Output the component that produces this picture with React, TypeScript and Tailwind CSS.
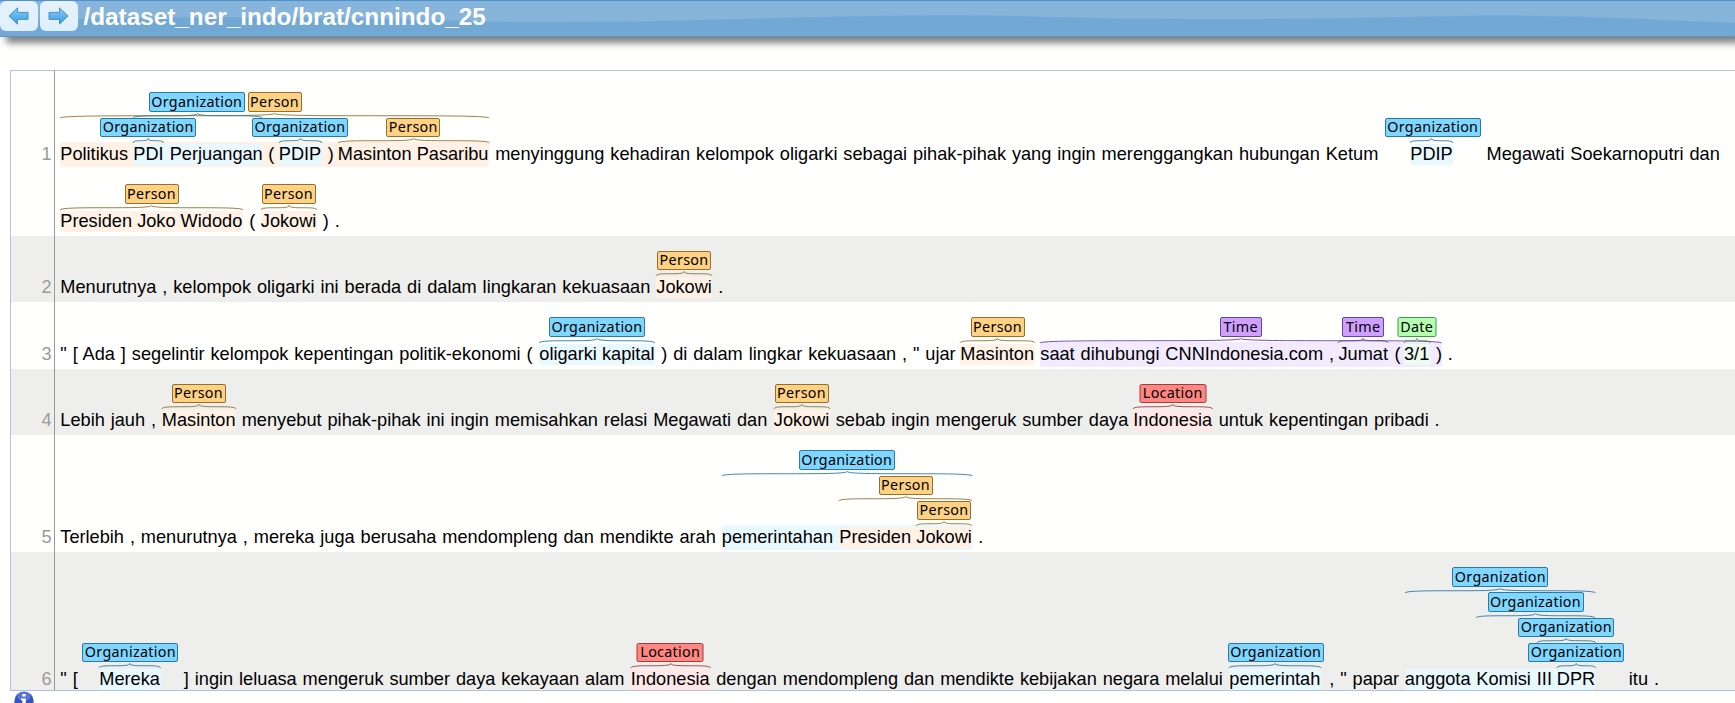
import type { ReactNode } from 'react';

type Kind = 'org' | 'person' | 'time' | 'date' | 'loc';

const kinds: Record<Kind, { name: string; label: string; mark: string; stroke: string }> = {
  org: { name: 'Organization', label: 'w-[96px] bg-[#7fd6ff] border-[#2a7ba2]', mark: 'bg-[#e8f8ff]', stroke: '#2a7ba2' },
  person: { name: 'Person', label: 'w-[54px] bg-[#ffd182] border-[#94702f]', mark: 'bg-[#fff1e5]', stroke: '#94702f' },
  time: { name: 'Time', label: 'w-[42px] bg-[#cfa0ff] border-[#6a419a]', mark: 'bg-[#f2eaff]', stroke: '#6a419a' },
  date: { name: 'Date', label: 'w-[39px] bg-[#b4ffb0] border-[#3f9a45]', mark: 'bg-[#eefcef]', stroke: '#3f9a45' },
  loc: { name: 'Location', label: 'w-[67px] bg-[#ff8781] border-[#a33c3c]', mark: 'bg-[#ffe8e7]', stroke: '#a33c3c' },
};

const levels = [
  { label: 'top-[calc(50%-37.2px)]', brace: 'top-[calc(50%-16.8px)]' },
  { label: 'top-[calc(50%-62.4px)]', brace: 'top-[calc(50%-42px)]' },
  { label: 'top-[calc(50%-87.6px)]', brace: 'top-[calc(50%-67.2px)]' },
  { label: 'top-[calc(50%-112.8px)]', brace: 'top-[calc(50%-92.4px)]' },
];

function Brace({ width, stroke, className }: { width: number; stroke: string; className: string }) {
  const c = width / 2;
  return (
    <svg className={`absolute left-0 overflow-visible ${className}`} width={width} height={5} fill="none">
      <path d={`M0,5 C0,0.5 ${c},5 ${c},0.5 C${c},5 ${width},0.5 ${width},5`} stroke={stroke} strokeWidth={0.9} />
    </svg>
  );
}

type MarkProps = {
  kind: Kind;
  w: number;
  level?: number;
  outer?: boolean;
  plain?: boolean;
  shift?: string;
  children: ReactNode;
};

function Mark({ kind, w, level = 0, outer, plain, shift = '-ml-[0.3px]', children }: MarkProps) {
  const k = kinds[kind];
  return (
    <span
      className={`relative flex shrink-0 items-center rounded-[3px] whitespace-pre ${outer ? 'h-[25px]' : 'h-[21px]'} ${plain ? '' : k.mark}`}
      style={{ width: w }}
    >
      <Brace width={w} stroke={k.stroke} className={levels[level].brace} />
      {children}
      <span
        className={`absolute left-1/2 flex h-[19.5px] -translate-x-1/2 items-center justify-center rounded-[2px] border font-['Noto_Sans',sans-serif] text-[14.3px] leading-none tracking-[0.3px] ${levels[level].label} ${k.label} ${shift}`}
      >
        {k.name}
      </span>
    </span>
  );
}

function T({ w, children }: { w?: number; children: ReactNode }) {
  return (
    <span className="shrink-0 [word-spacing:0.85px] whitespace-pre" style={{ width: w }}>
      {children}
    </span>
  );
}

function Line({ children }: { children: ReactNode }) {
  return <div className="flex h-[21px] items-center">{children}</div>;
}

function Row({ n, height, shade, pad = 'pb-[4px]', children }: { n: number; height: string; shade?: boolean; pad?: string; children: ReactNode }) {
  return (
    <div className={`flex ${height} ${shade ? 'bg-[#eeeeed]' : ''}`}>
      <div className={`flex w-[44px] shrink-0 flex-col border-r border-[#999] pr-[2.5px] text-right text-[#9b9b9b] ${n === 1 ? 'justify-start pt-[73px]' : `justify-end ${pad}`}`}>
        <span className="leading-[21px]">{n}</span>
      </div>
      <div className={`flex flex-col justify-end gap-[45.7px] pl-[5.3px] ${pad}`}>{children}</div>
    </div>
  );
}

function NavButton({ flip }: { flip?: boolean }) {
  return (
    <button className="flex h-[30px] w-[37.5px] items-center justify-center rounded-[6px] bg-linear-to-b from-[#e6f1fb] to-[#def0fd]">
      <svg width="21" height="18" viewBox="0 0 21 18" className={flip ? '-scale-x-100' : ''}>
        <defs>
          <linearGradient id={flip ? 'ar' : 'al'} x1="0" y1="0" x2="0" y2="1">
            <stop offset="0" stopColor="#86cdf7" />
            <stop offset="1" stopColor="#349ce4" />
          </linearGradient>
        </defs>
        <path d="M1 9 L9.5 0.9 V5.4 H20 V12.4 H9.5 V17.1 Z" fill={flip ? 'url(#ar)' : 'url(#al)'} stroke="#4a8fc4" strokeWidth="1" strokeLinejoin="round" />
      </svg>
    </button>
  );
}

export default function App() {
  return (
    <div className="h-[703px] w-[1735px] overflow-hidden bg-[#fffffe] font-['Liberation_Sans',Arial,sans-serif] text-[18.2px] text-black">
      <header className="relative h-[37px] border-t border-b border-t-[#4b93c8] border-b-[#5e96c2] bg-[#71a9d4] shadow-[6px_6px_7px_#808080]">
        <svg className="absolute inset-0" width="1735" height="35" preserveAspectRatio="none">
          <path d="M0,0 H1735 V22 C1660,19 1560,13 1460,15 C1300,18 1200,20 1050,16 C900,10 700,22 520,21 C350,17 200,13 0,20 Z" fill="#87b4da" />
        </svg>
        <div className="relative flex">
          <div className="flex gap-[2.5px]">
            <NavButton />
            <NavButton flip />
          </div>
          <h1 className="ml-[6px] text-[24.3px] leading-[31px] font-bold text-white">/dataset_ner_indo/brat/cnnindo_25</h1>
        </div>
      </header>

      <main className="mt-[33.4px] ml-[10px] border border-r-0 border-[#b4bfe6]">
        <Row n={1} height="h-[164.5px]">
          <Line>
            <Mark kind="person" w={429} level={1} outer>
              <T w={73}>Politikus </T>
              <Mark kind="org" w={129} level={1} shift="-ml-[1px]">
                <Mark kind="org" w={30.5} plain>PDI</Mark>
                <T> Perjuangan</T>
              </Mark>
              <T w={16.5}> ( </T>
              <Mark kind="org" w={43}>PDIP</Mark>
              <T w={16}> ) </T>
              <Mark kind="person" w={151.5}>Masinton Pasaribu</Mark>
            </Mark>
            <T w={921}> menyinggung kehadiran kelompok oligarki sebagai pihak-pihak yang ingin merenggangkan hubungan Ketum</T>
            <Mark kind="org" w={43} shift="ml-[1px]">PDIP</Mark>
            <T w={33.3}> </T>
            <T>Megawati Soekarnoputri dan</T>
          </Line>
          <Line>
            <Mark kind="person" w={183}>Presiden Joko Widodo</Mark>
            <T w={17.5}> ( </T>
            <Mark kind="person" w={56}>Jokowi</Mark>
            <T> ) .</T>
          </Line>
        </Row>
        <Row n={2} height="h-[66.5px]" shade>
          <Line>
            <T w={596}>Menurutnya , kelompok oligarki ini berada di dalam lingkaran kekuasaan </T>
            <Mark kind="person" w={56}>Jokowi</Mark>
            <T> .</T>
          </Line>
        </Row>
        <Row n={3} height="h-[66.5px]">
          <Line>
            <T w={479}>" [ Ada ] segelintir kelompok kepentingan politik-ekonomi ( </T>
            <Mark kind="org" w={116}>oligarki kapital</Mark>
            <T w={305}> ) di dalam lingkar kekuasaan , " ujar </T>
            <Mark kind="person" w={75}>Masinton</Mark>
            <T w={5}> </T>
            <Mark kind="time" w={401.5} outer>
              <T w={298.2}>saat dihubungi CNNIndonesia.com , </T>
              <Mark kind="time" w={50}>Jumat</Mark>
              <T w={15.5}> ( </T>
              <Mark kind="date" w={26}>3/1</Mark>
              <T> )</T>
            </Mark>
            <T> .</T>
          </Line>
        </Row>
        <Row n={4} height="h-[66.5px]" shade>
          <Line>
            <T w={101.5}>Lebih jauh , </T>
            <Mark kind="person" w={74}>Masinton</Mark>
            <T w={538}> menyebut pihak-pihak ini ingin memisahkan relasi Megawati dan </T>
            <Mark kind="person" w={56}>Jokowi</Mark>
            <T w={303.5}> sebab ingin mengeruk sumber daya </T>
            <Mark kind="loc" w={79.5}>Indonesia</Mark>
            <T> untuk kepentingan pribadi .</T>
          </Line>
        </Row>
        <Row n={5} height="h-[117px]">
          <Line>
            <T w={661.5}>Terlebih , menurutnya , mereka juga berusaha mendompleng dan mendikte arah </T>
            <Mark kind="org" w={250.5} level={2} outer>
              <T w={117.5}>pemerintahan </T>
              <Mark kind="person" w={133} level={1}>
                <T w={77}>Presiden </T>
                <Mark kind="person" w={56} plain>Jokowi</Mark>
              </Mark>
            </Mark>
            <T> .</T>
          </Line>
        </Row>
        <Row n={6} height="h-[138px]" shade pad="pb-0">
          <Line>
            <T w={39}>" [</T>
            <Mark kind="org" w={61.5} shift="ml-[0.3px]">Mereka</Mark>
            <T w={23}> </T>
            <T w={447}>] ingin leluasa mengeruk sumber daya kekayaan alam </T>
            <Mark kind="loc" w={79.5}>Indonesia</Mark>
            <T w={519}> dengan mendompleng dan mendikte kebijakan negara melalui </T>
            <Mark kind="org" w={92} shift="ml-[0.5px]">pemerintah</Mark>
            <T w={8}> </T>
            <T w={75.5}>, " papar </T>
            <Mark kind="org" w={190.5} level={3} shift="ml-[0.3px]">
              <T w={71.5}>anggota </T>
              <Mark kind="org" w={119} level={2} plain>
                <T w={60.5}>Komisi </T>
                <Mark kind="org" w={58.5} level={1} plain shift="ml-[0.3px]">
                  <T w={20}>III </T>
                  <Mark kind="org" w={38.5} plain shift="ml-[0.3px]">DPR</Mark>
                </Mark>
              </Mark>
            </Mark>
            <T w={33.5}> </T>
            <T>itu .</T>
          </Line>
        </Row>
      </main>
      <svg className="ml-[14px] block" width="20" height="20" viewBox="0 0 20 20">
        <circle cx="10" cy="10" r="9.6" fill="#3353bd" />
        <ellipse cx="10" cy="5.5" rx="7" ry="4.5" fill="#6f8be0" opacity="0.6" />
        <path d="M8.3 3 h3.4 v2.6 h-3.4 z M7 7.6 h4.8 v7 h1.4 v1.6 h-6.2 v-1.6 h1.4 v-5.4 h-1.4 z" fill="#fff" />
      </svg>
    </div>
  );
}
